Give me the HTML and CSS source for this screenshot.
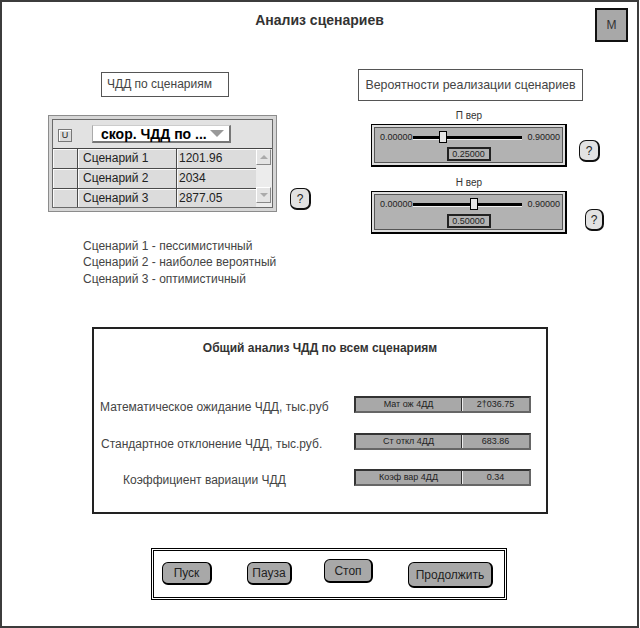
FILE: index.html
```html
<!DOCTYPE html>
<html lang="ru">
  <head>
    <meta charset="UTF-8" />
    <meta name="viewport" content="width=device-width, initial-scale=1.0" />
    <title>Анализ сценариев</title>
    <link rel="stylesheet" href="styles.css">
  </head>
  <body>
    <div class="frame">
      <header class="header">
        <h1 class="title">Анализ сценариев</h1>
        <button class="m-btn">M</button>
      </header>

      <div class="top">
        <section class="left">
          <div class="caption caption-npv">ЧДД по сценариям</div>
          <div class="table-row">
            <div class="grid-widget">
              <div class="grid-inner">
                <div class="grid-head">
                  <span class="u-btn">U</span>
                  <div class="dropdown">
                    <span>скор. ЧДД по ...</span>
                    <span class="dd-arrow"></span>
                  </div>
                </div>
                <div class="grid-body">
                  <div class="rows">
                    <div class="row">
                      <span class="cell c0"></span>
                      <span class="cell c1">Сценарий 1</span>
                      <span class="cell c2">1201.96</span>
                    </div>
                    <div class="row">
                      <span class="cell c0"></span>
                      <span class="cell c1">Сценарий 2</span>
                      <span class="cell c2">2034</span>
                    </div>
                    <div class="row">
                      <span class="cell c0"></span>
                      <span class="cell c1">Сценарий 3</span>
                      <span class="cell c2">2877.05</span>
                    </div>
                  </div>
                  <div class="scrollbar">
                    <span class="sb-btn sb-up"></span>
                    <span class="sb-btn sb-down"></span>
                  </div>
                </div>
              </div>
            </div>
            <button class="help help-table">?</button>
          </div>
          <div class="legend">
            <div>Сценарий 1 - пессимистичный</div>
            <div>Сценарий 2 - наиболее вероятный</div>
            <div>Сценарий 3 - оптимистичный</div>
          </div>
        </section>

        <section class="right">
          <div class="caption caption-prob">Вероятности реализации сценариев</div>

          <div class="slider-label">П вер</div>
          <div class="slider-row">
            <div class="slider-panel">
              <div class="slider-line">
                <span>0.00000</span>
                <div class="track"><span class="thumb" style="left: 27.8%"></span></div>
                <span>0.90000</span>
              </div>
              <div class="slider-value">0.25000</div>
            </div>
            <button class="help help-p">?</button>
          </div>

          <div class="slider-label slider-label-2">Н вер</div>
          <div class="slider-row">
            <div class="slider-panel">
              <div class="slider-line">
                <span>0.00000</span>
                <div class="track"><span class="thumb" style="left: 55.6%"></span></div>
                <span>0.90000</span>
              </div>
              <div class="slider-value">0.50000</div>
            </div>
            <button class="help help-n">?</button>
          </div>
        </section>
      </div>

      <section class="summary">
        <h2 class="summary-title">Общий анализ ЧДД по всем сценариям</h2>
        <div class="metric metric-mean">
          <span class="metric-label">Математическое ожидание ЧДД, тыс.руб</span>
          <div class="indicator">
            <span class="ind-name">Мат ож 4ДД</span>
            <span class="ind-value">2†036.75</span>
          </div>
        </div>
        <div class="metric metric-std">
          <span class="metric-label">Стандартное отклонение ЧДД, тыс.руб.</span>
          <div class="indicator">
            <span class="ind-name">Ст откл 4ДД</span>
            <span class="ind-value">683.86</span>
          </div>
        </div>
        <div class="metric metric-cv">
          <span class="metric-label">Коэффициент вариации ЧДД</span>
          <div class="indicator">
            <span class="ind-name">Коэф вар 4ДД</span>
            <span class="ind-value">0.34</span>
          </div>
        </div>
      </section>

      <div class="controls">
        <button class="ctl ctl-start">Пуск</button>
        <button class="ctl ctl-pause">Пауза</button>
        <button class="ctl ctl-stop">Стоп</button>
        <button class="ctl ctl-resume">Продолжить</button>
      </div>
    </div>
  </body>
</html>
```

FILE: styles.css
```css
body {
  margin: 0;
  background-color: #ffffff;
  font-family: "Liberation Sans", Arial, sans-serif;
  color: #333;
}

button {
  font-family: "Liberation Sans", Arial, sans-serif;
  padding: 0;
  cursor: pointer;
}

.frame {
  width: 639px;
  height: 628px;
  box-sizing: border-box;
  border: 2px solid #3c3c3c;
  overflow: hidden;
}

/* header */
.header {
  display: grid;
  grid-template-columns: 1fr auto 1fr;
  padding-top: 6px;
}

.title {
  grid-column: 2;
  margin: 4px 0 0 0;
  font-size: 14px;
  line-height: 17px;
  font-weight: bold;
  color: #333;
}

.m-btn {
  grid-column: 3;
  justify-self: end;
  margin-right: 9px;
  width: 33px;
  height: 34px;
  background: #a8a8a8;
  border: 2px solid #111;
  font-size: 12px;
  color: #333;
}

/* top area */
.top {
  display: flex;
}

.left {
  width: 340px;
}

.right {
  flex: 1;
}

.caption {
  box-sizing: border-box;
  border: 1px solid #555;
  color: #444;
}

.caption-npv {
  margin: 30px 0 0 99px;
  width: 128px;
  height: 25px;
  padding-left: 5px;
  font-size: 12px;
  line-height: 23px;
}

.caption-prob {
  margin: 27px 0 0 16px;
  width: 225px;
  height: 32px;
  font-size: 12.4px;
  line-height: 30px;
  text-align: center;
}

.table-row {
  display: flex;
  align-items: flex-end;
  margin: 18px 0 0 46px;
}

/* grid widget */
.grid-widget {
  width: 229px;
  height: 97px;
  box-sizing: border-box;
  border: 1px solid #8c8c8c;
  padding: 3px;
  background: #d6d6d6;
}

.grid-inner {
  height: 100%;
  box-sizing: border-box;
  border: 1px solid #6a6a6a;
  background: #e2e2e2;
  overflow: hidden;
}

.grid-head {
  display: flex;
  align-items: flex-start;
  height: 28px;
  border-bottom: 1px solid #444;
}

.u-btn {
  margin: 9px 0 0 5px;
  width: 14px;
  height: 13px;
  box-sizing: border-box;
  border: 1px solid #777;
  background: #dcdcdc;
  box-shadow: inset 1px 1px 0 #fff;
  font-size: 9px;
  line-height: 11px;
  text-align: center;
  color: #222;
}

.dropdown {
  display: flex;
  align-items: center;
  justify-content: space-between;
  margin: 5px 0 0 20px;
  width: 139px;
  height: 18px;
  box-sizing: border-box;
  padding: 0 5px 0 8px;
  background: #fff;
  border-left: 1px solid #aaa;
  border-top: 1px solid #ccc;
  border-right: 2px solid #777;
  border-bottom: 2px solid #777;
  font-size: 14px;
  font-weight: bold;
  color: #000;
}

.dd-arrow {
  width: 0;
  height: 0;
  border-left: 7px solid transparent;
  border-right: 7px solid transparent;
  border-top: 7px solid #999;
}

.grid-body {
  display: flex;
}

.rows {
  width: 203px;
}

.row {
  display: flex;
  height: 20px;
  box-sizing: border-box;
  border-bottom: 1px solid #4a4a4a;
}

.cell {
  box-sizing: border-box;
  height: 19px;
  background: #dcdcdc;
  box-shadow: inset 1px 1px 0 #fafafa;
  font-size: 12px;
  line-height: 19px;
  color: #222;
}

.c0 {
  width: 24px;
}

.c1 {
  width: 99px;
  padding-left: 5px;
  border-left: 1px solid #4a4a4a;
}

.c2 {
  width: 80px;
  padding-left: 2px;
  border-left: 1px solid #4a4a4a;
}

.scrollbar {
  display: flex;
  flex-direction: column;
  justify-content: space-between;
  width: 16px;
  height: 58px;
  background: #ececec;
}

.sb-btn {
  position: relative;
  width: 15px;
  height: 16px;
  box-sizing: border-box;
  background: #e4e4e4;
  border-top: 1px solid #fff;
  border-left: 1px solid #fff;
  border-right: 1px solid #888;
  border-bottom: 1px solid #888;
}

.sb-up::after,
.sb-down::after {
  content: "";
  position: absolute;
  left: 3px;
  top: 5px;
  border-left: 4px solid transparent;
  border-right: 4px solid transparent;
}

.sb-up::after {
  border-bottom: 4px solid #aaa;
}

.sb-down::after {
  border-top: 4px solid #aaa;
}

.sb-down {
  margin-bottom: 4px;
}

/* help buttons */
.help {
  width: 21px;
  height: 22px;
  box-sizing: border-box;
  background: #e2e2e2;
  border: 1px solid #111;
  border-right-width: 2px;
  border-bottom-width: 2px;
  border-radius: 7px;
  font-size: 12px;
  color: #222;
}

.help-table {
  margin: 0 0 2px 13px;
}

.help-p {
  margin: 0 0 5px 12px;
}

.help-n {
  margin: 0 0 3px 18px;
  width: 19px;
}

.legend {
  margin: 26px 0 0 81px;
  font-size: 12px;
  line-height: 16.4px;
  color: #444;
}

/* sliders */
.slider-label {
  margin: 9px 0 0 29px;
  width: 196px;
  font-size: 10px;
  line-height: 12px;
  text-align: center;
  color: #333;
}

.slider-label-2 {
  margin-top: 10px;
}

.slider-row {
  display: flex;
  align-items: flex-end;
  margin: 2px 0 0 29px;
}

.slider-panel {
  width: 196px;
  height: 43px;
  box-sizing: border-box;
  border: 1px solid #000;
  border-right-width: 2px;
  border-bottom-width: 2px;
  background: #b2b2b2;
  box-shadow: inset 0 0 0 2px #dedede, inset 0 0 0 3px #555;
  padding-top: 5px;
}

.slider-line {
  display: flex;
  align-items: center;
  height: 14px;
  padding: 0 5px 0 8px;
  font-size: 9px;
  color: #222;
}

.track {
  position: relative;
  flex: 1;
  height: 3px;
  margin-right: 5px;
  background: #000;
  box-shadow: 0 1px 0 #eee;
}

.thumb {
  position: absolute;
  top: 50%;
  width: 8px;
  height: 12px;
  box-sizing: border-box;
  border: 1px solid #000;
  background: #e6e6e6;
  transform: translate(-50%, -50%);
}

.slider-value {
  margin: 3px auto 0 auto;
  width: 44px;
  height: 14px;
  box-sizing: border-box;
  border: 2px solid #222;
  font-size: 9px;
  line-height: 10px;
  text-align: center;
  color: #222;
}

/* summary */
.summary {
  margin: 40px 0 0 90px;
  width: 456px;
  height: 187px;
  box-sizing: border-box;
  border: 2px solid #222;
}

.summary-title {
  margin: 11px 0 0 0;
  font-size: 12px;
  line-height: 16px;
  font-weight: bold;
  text-align: center;
  color: #333;
}

.metric {
  display: grid;
  grid-template-columns: 260px 177px;
  align-items: center;
  height: 17px;
}

.metric-label {
  margin-top: 5px;
  font-size: 12px;
  line-height: 16px;
  color: #444;
  white-space: nowrap;
}

.metric-mean {
  margin-top: 38px;
}

.metric-mean .metric-label {
  padding-left: 6px;
}

.metric-std {
  margin-top: 20px;
}

.metric-std .metric-label {
  padding-left: 7px;
}

.metric-cv {
  margin-top: 19px;
}

.metric-cv .metric-label {
  padding-left: 29px;
}

.indicator {
  display: flex;
  height: 17px;
  box-sizing: border-box;
  border: 2px solid #333;
  border-right-color: #666;
  border-bottom-color: #666;
  background: #a8a8a8;
  font-size: 9px;
  line-height: 13px;
  color: #222;
  text-align: center;
}

.ind-name {
  width: 105px;
}

.ind-value {
  flex: 1;
  border-left: 1px solid #333;
  box-shadow: inset 1px 0 0 #eee;
}

/* control buttons */
.controls {
  display: flex;
  align-items: flex-start;
  margin: 34px 0 0 149px;
  width: 356px;
  height: 52px;
  box-sizing: border-box;
  border: 3px double #000;
  padding: 11px 0 0 8px;
}

.ctl {
  height: 23px;
  box-sizing: border-box;
  background: #a8a8a8;
  border: 1px solid #000;
  border-right-width: 2px;
  border-bottom-width: 2px;
  border-radius: 6px;
  font-size: 12px;
  color: #222;
}

.ctl-start {
  width: 50px;
}

.ctl-pause {
  width: 45px;
  margin-left: 35px;
}

.ctl-stop {
  width: 49px;
  height: 24px;
  margin: -3px 0 0 32px;
}

.ctl-resume {
  width: 85px;
  height: 26px;
  margin-left: 35px;
}
```
